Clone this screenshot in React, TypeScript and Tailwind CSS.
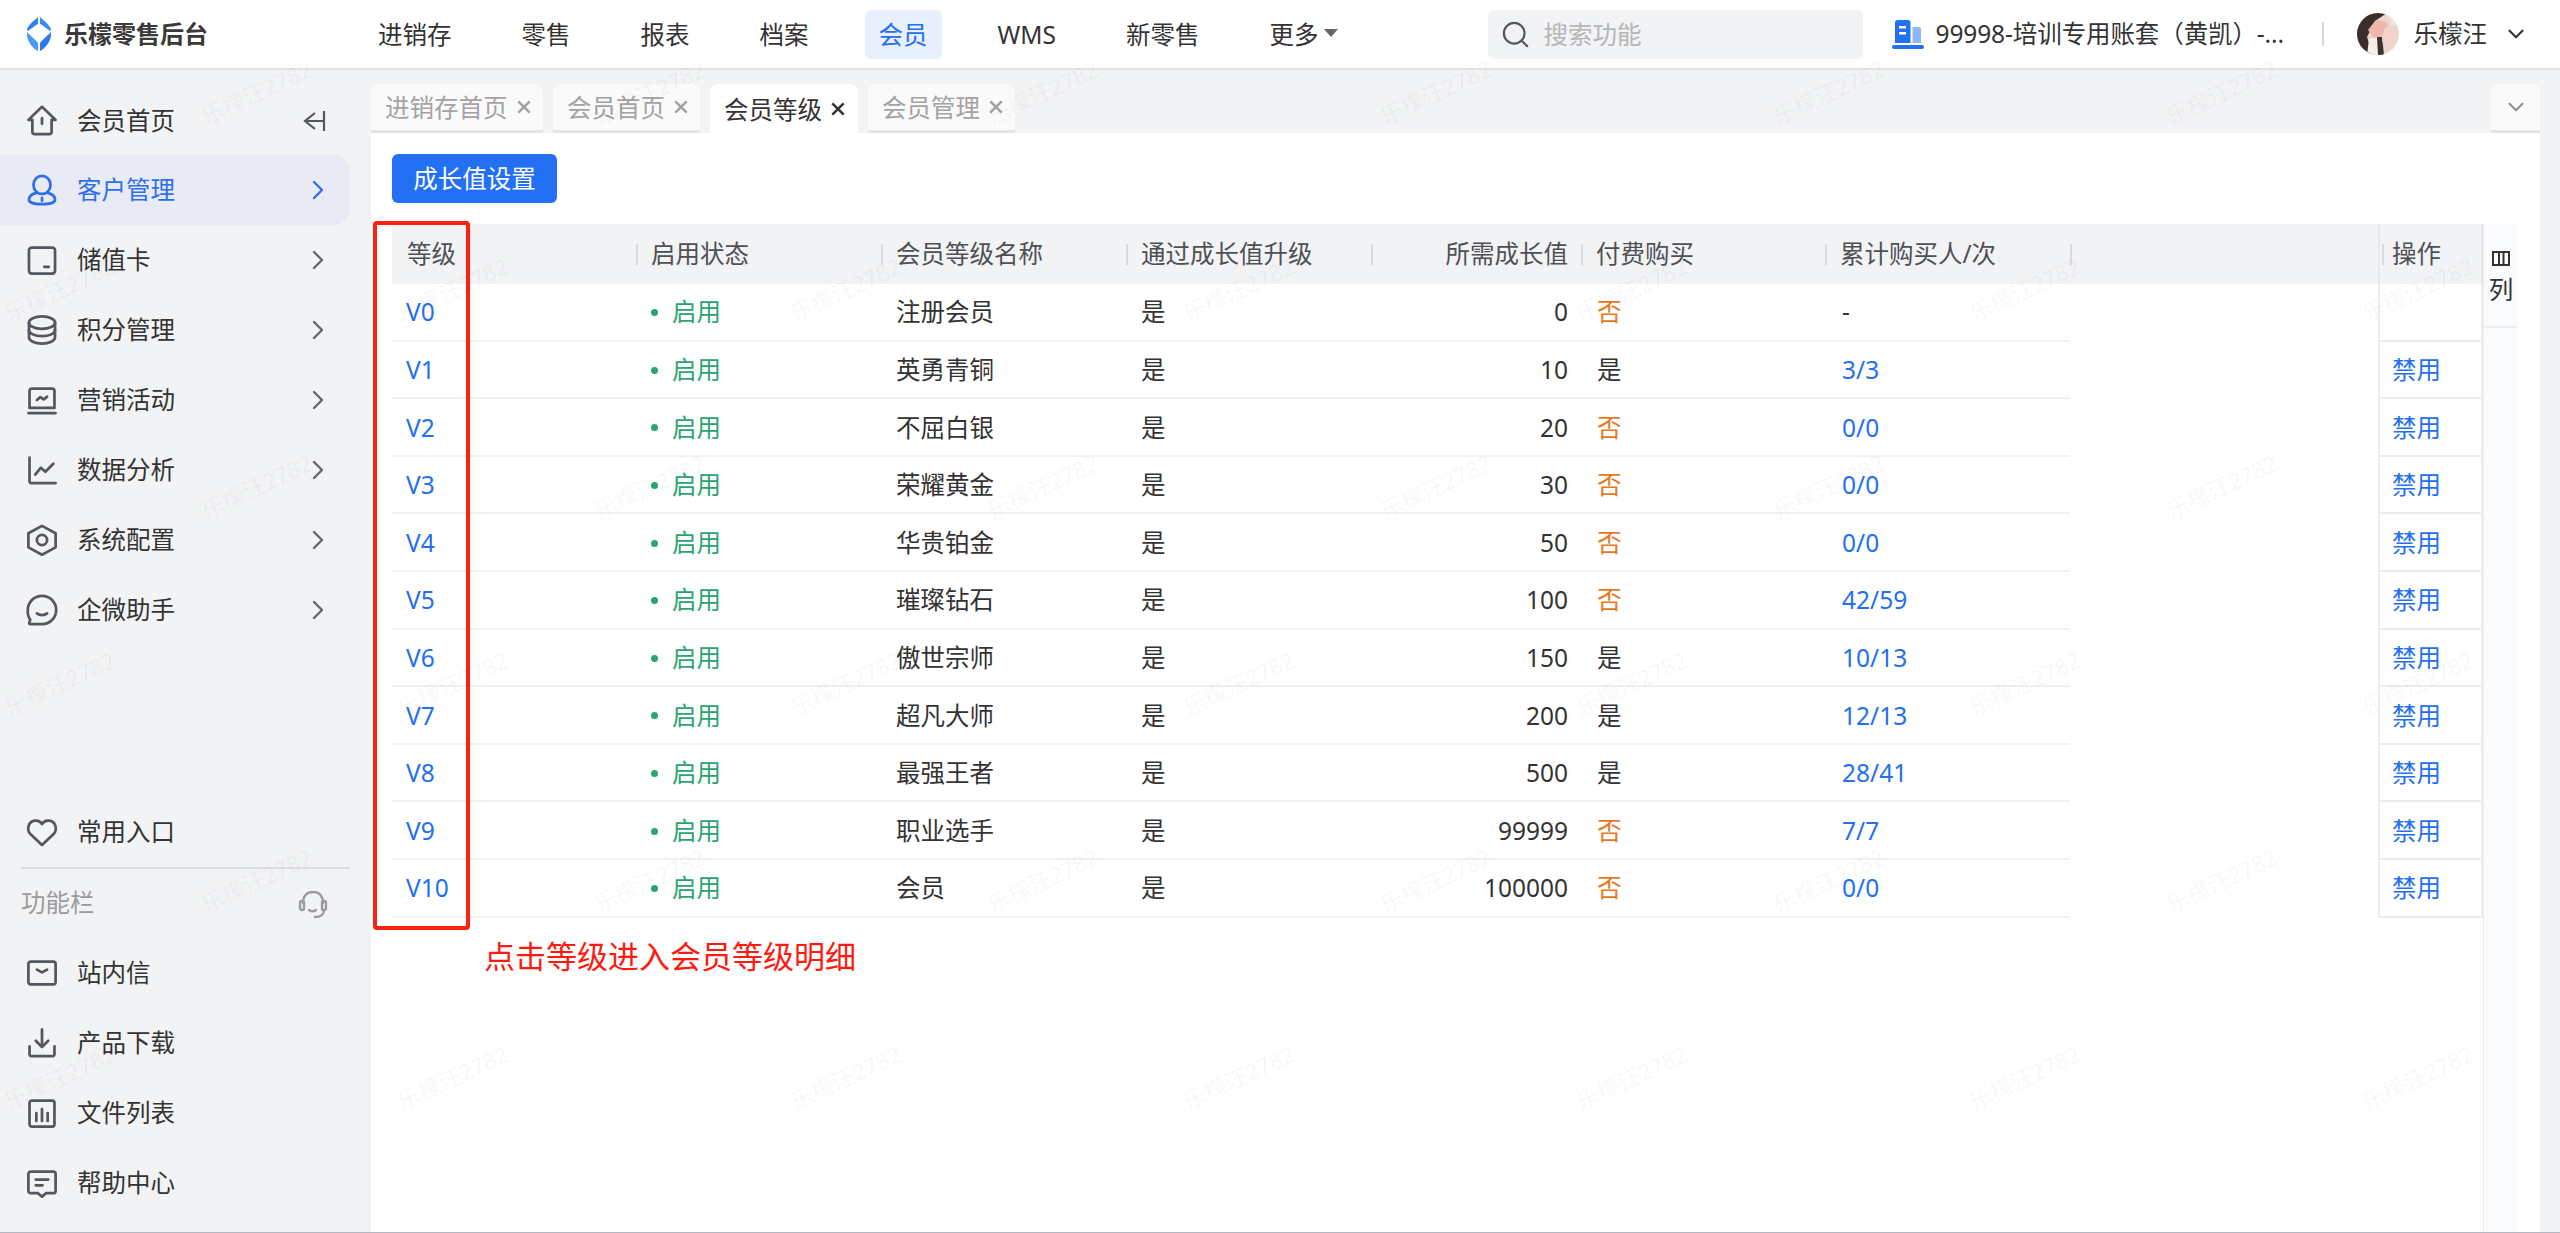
import React from "react";
import { ChevronRight, ChevronDown, Search } from "lucide-react";

const NAV = ["进销存", "零售", "报表", "档案", "会员", "WMS", "新零售"];
const TABS = [
  { label: "进销存首页", w: "w-[172px]" },
  { label: "会员首页", w: "w-[147px]" },
  { label: "会员等级", w: "w-[148px]", active: true },
  { label: "会员管理", w: "w-[147px]" },
];

const ROWS = [
  ["V0", "注册会员", "0", "否", "-"],
  ["V1", "英勇青铜", "10", "是", "3/3"],
  ["V2", "不屈白银", "20", "否", "0/0"],
  ["V3", "荣耀黄金", "30", "否", "0/0"],
  ["V4", "华贵铂金", "50", "否", "0/0"],
  ["V5", "璀璨钻石", "100", "否", "42/59"],
  ["V6", "傲世宗师", "150", "是", "10/13"],
  ["V7", "超凡大师", "200", "是", "12/13"],
  ["V8", "最强王者", "500", "是", "28/41"],
  ["V9", "职业选手", "99999", "否", "7/7"],
  ["V10", "会员", "100000", "否", "0/0"],
];

// watermark grid, same text repeated diagonally over the whole page
const WATERMARKS: { x: number; y: number }[] = [];
for (let r = 0; r < 6; r++) {
  for (let c = 0; c < 7; c++) {
    const x = (r % 2 === 0 ? 257 : 60) + c * 393;
    if (x < 2480) WATERMARKS.push({ x, y: 93 + r * 197 });
  }
}

function Icon({ children, className = "" }: { children: React.ReactNode; className?: string }) {
  return (
    <svg
      viewBox="0 0 30 30"
      fill="none"
      stroke="currentColor"
      strokeWidth="2.4"
      strokeLinecap="round"
      strokeLinejoin="round"
      className={`w-[34px] h-[34px] shrink-0 ${className}`}
    >
      {children}
    </svg>
  );
}

const icons: Record<string, React.ReactNode> = {
  home: (
    <>
      <path d="M15 2.5 27 14h-3.500v10.500a2 2 0 0 1-2 2h-13a2 2 0 0 1-2-2V14H3z" />
      <path d="M15 12.500v5" />
    </>
  ),
  user: (
    <>
      <ellipse cx="15" cy="10.500" rx="7.500" ry="8" />
      <path d="M10 17.500c-4 1-6.500 3.500-6.500 6 0 2.500 5 4 11.500 4s11.500-1.500 11.500-4c0-2.500-2.500-5-6.500-6" />
      <path d="M15 22v2.500" />
    </>
  ),
  card: (
    <>
      <rect x="3.500" y="4" width="23" height="23" rx="2.500" />
      <path d="M17 21h4" />
    </>
  ),
  coin: (
    <>
      <ellipse cx="15" cy="8.500" rx="11.500" ry="5.500" />
      <path d="M3.500 8.500v6.500c0 3 5 5.500 11.500 5.500s11.500-2.500 11.500-5.500V8.500" />
      <path d="M3.500 15v6.500c0 3 5 5.500 11.500 5.500s11.500-2.500 11.500-5.500V15" />
    </>
  ),
  monitor: (
    <>
      <path d="M4 22V7a2 2 0 0 1 2-2h18a2 2 0 0 1 2 2v15z" />
      <path d="M3 26.500h24" />
      <path d="m10.500 15 3-2.500 3 2 3-2.500" />
    </>
  ),
  chart: (
    <>
      <path d="M4 4v21a1.500 1.500 0 0 0 1.500 1.500H27" />
      <path d="m9 19 5-6 4 3.500 7-7" />
    </>
  ),
  hex: (
    <>
      <path d="m15 2.500 12 6.500v12.500l-12 6.500-12-6.500V9z" />
      <circle cx="15" cy="15" r="4.500" />
    </>
  ),
  chat: (
    <>
      <path d="M15 2.500c7 0 12.500 5.500 12.500 12.500S22 27.500 15 27.500H5c-1.500 0-1.500-1-1-2l.7-1.800A12.500 12.500 0 0 1 2.500 15C2.500 8 8 2.500 15 2.500z" />
      <path d="M10.500 18c2.500 2 6.500 2 9 0" />
    </>
  ),
  heart: <path d="M15 26.500 4.500 16.500C1.500 13 2.500 6 8.500 5c3-.4 5.300 1 6.500 3 1.200-2 3.500-3.400 6.500-3 6 1 7 8 4 11.500z" />,
  mail: (
    <>
      <rect x="3" y="5" width="24" height="20" rx="2" />
      <path d="m10.500 12 4.500 2.500 4.500-2.500" />
    </>
  ),
  download: (
    <>
      <path d="M15 3v15" />
      <path d="m9.500 13 5.500 5.500 5.500-5.500" />
      <path d="M4 18v7a1.500 1.500 0 0 0 1.500 1.500h19A1.500 1.500 0 0 0 26 25v-7" />
    </>
  ),
  bars: (
    <>
      <rect x="4" y="4" width="22" height="23" rx="2" />
      <path d="M10 15v7M15 11.500V22M20 15v7" />
    </>
  ),
  message: (
    <>
      <path d="M5 5h20a2 2 0 0 1 2 2v15a2 2 0 0 1-2 2h-6.500L15 27l-3.500-3H5a2 2 0 0 1-2-2V7a2 2 0 0 1 2-2z" />
      <path d="M9.500 12h11M9.500 17h6" />
    </>
  ),
};

function SideItem({ icon, label, arrow = true, active = false }: { icon: string; label: string; arrow?: boolean; active?: boolean }) {
  return (
    <div
      className={`flex items-center h-[70px] w-[350px] pl-[25px] pr-[16px] rounded-r-[16px] ${
        active ? "bg-[#e8ebf4] text-[#2f6fed]" : "text-[#333333]"
      }`}
    >
      <Icon className={active ? "text-[#2f6fed]" : "text-[#55565f]"}>{icons[icon]}</Icon>
      <span className="ml-[18px] flex-1 text-[24.5px]">{label}</span>
      {arrow && <ChevronRight size={32} strokeWidth={1.8} className={active ? "text-[#2f6fed]" : "text-[#66676e]"} />}
    </div>
  );
}

function TabClose({ color }: { color: string }) {
  return (
    <svg viewBox="0 0 14 14" className={`w-[16px] h-[16px] ml-[8px] ${color}`} stroke="currentColor" strokeWidth="2.2" fill="none">
      <path d="m2 2 10 10M12 2 2 12" />
    </svg>
  );
}

function HeadCell({ w, sep = true, right = false, label }: { w: string; sep?: boolean; right?: boolean; label?: string }) {
  return (
    <div className={`flex items-center h-full ${w}`}>
      <span className={`w-[2px] h-[21px] shrink-0 ${sep ? "bg-[#d9dadd]" : ""}`} />
      <span className={`pl-[13px] flex-1 whitespace-nowrap ${right ? "text-right pr-[13px]" : ""}`}>{label}</span>
    </div>
  );
}

function Row({ row }: { row: string[] }) {
  const [level, name, need, paid, total] = row;
  return (
    <div className="flex h-[57.6px]">
      <div className="flex w-[1678px] items-center pt-[2px] border-b-2 border-[#f0f1f3]">
        <div className="w-[244px] pl-[14px] text-[#2470f0]">{level}</div>
        <div className="w-[245px] pl-[15px] flex items-center text-[#2ba471]">
          <span className="w-[7px] h-[7px] rounded-full bg-[#2ba471] mr-[14px]" />
          启用
        </div>
        <div className="w-[245px] pl-[15px]">{name}</div>
        <div className="w-[245px] pl-[15px]">是</div>
        <div className="w-[210px] pr-[13px] text-right">{need}</div>
        <div className={`w-[244px] pl-[16px] ${paid === "否" ? "text-[#e8781e]" : ""}`}>{paid}</div>
        <div className={`w-[245px] pl-[17px] ${total === "-" ? "" : "text-[#2470f0]"}`}>{total}</div>
      </div>
      <div className="w-[308px]" />
      <div className="w-[105px] flex items-center pt-[2px] pl-[12px] border-x-2 border-b-2 border-[#ecedef] text-[#2470f0]">
        {level === "V0" ? "" : "禁用"}
      </div>
    </div>
  );
}

export default function App() {
  return (
    <div className="relative w-[2560px] h-[1233px] overflow-hidden flex flex-col bg-[#f2f3f5] border-b border-[#b4bac2] text-[24.5px] text-[#333333] font-['Noto_Sans','Noto_Sans_CJK_SC',sans-serif]">
      {/* top bar */}
      <header className="h-[70px] shrink-0 flex items-center bg-white border-b-2 border-[#e2e3e5]">
        <div className="w-[364px] flex items-center pl-[26px]">
          <svg viewBox="0 0 26 36" className="w-[26px] h-[36px]">
            <path d="M12 1C9 4 3 8 1 13l.500 2C4 14 8 10 12 8z" fill="#2f7ff5" />
            <path d="M14 1c3 3 9 7 11 12l-.500 2C22 14 18 10 14 8z" fill="#3b8bf7" />
            <path d="M13 9.500c2 3 4 5.500 6.500 7.500-2.500 2-4.500 4.500-6.500 7.500-2-3-4-5.500-6.500-7.500 2.500-2 4.500-4.500 6.500-7.500z" fill="#fff" />
            <path d="M1 16c2 2.500 8 7 11 11v8C6 32 0 24 1 16z" fill="#4a97f8" />
            <path d="M25 16c-2 2.500-8 7-11 11v8c6-3 12-11 11-19z" fill="#2b78f2" />
          </svg>
          <span className="ml-[12px] text-[24px] font-bold text-[#3a3a3a] whitespace-nowrap">乐檬零售后台</span>
        </div>
        <nav className="flex items-center gap-[42px]">
          {NAV.map((item) => (
            <div
              key={item}
              className={`h-[49px] px-[14px] pt-[2px] flex items-center rounded-[6px] ${item === "会员" ? "bg-[#e8effd] text-[#2470f0]" : ""}`}
            >
              {item}
            </div>
          ))}
          <div className="h-[49px] pl-[14px] pt-[2px] flex items-center">
            更多
            <span className="ml-[6px] mb-[4px] w-0 h-0 border-x-[7px] border-x-transparent border-t-[8px] border-t-[#666666]" />
          </div>
        </nav>
        <div className="ml-[150px] w-[375px] h-[49px] bg-[#f2f3f5] rounded-[6px] flex items-center pl-[12px] text-[#b5b6b8]">
          <Search size={31} strokeWidth={1.7} className="text-[#55565f]" />
          <span className="ml-[12px] pt-[3px]">搜索功能</span>
        </div>
        <svg viewBox="0 0 32 30" className="ml-[29px] w-[32px] h-[30px]">
          <path d="M3 3.500A2.500 2.500 0 0 1 5.500 1H16a2.500 2.500 0 0 1 2.500 2.500V24H3z" fill="#2470f5" />
          <rect x="7" y="7" width="7" height="2.500" fill="#fff" />
          <rect x="7" y="13" width="7" height="2.500" fill="#fff" />
          <path d="M20.500 8H27a2 2 0 0 1 2 2v14h-8.500z" fill="#8fb6fa" />
          <rect x="0" y="26" width="32" height="4" rx="2" fill="#2470f5" />
        </svg>
        <span className="ml-[11px] w-[348px] whitespace-nowrap tracking-[-0.1px]">99998-培训专用账套（黄凯）-...</span>
        <span className="ml-[39px] w-[2px] h-[24px] bg-[#d6d7d9]" />
        <svg viewBox="0 0 42 42" className="ml-[33px] w-[42px] h-[42px] rounded-full">
          <rect width="42" height="42" fill="#e8d8cc" />
          <path d="M0 0h30L18 8 10 24l6 18H0z" fill="#3a2d2a" />
          <path d="M18 8c6-2 11 0 13 5l-4 10-10 2-6-8z" fill="#efb6ac" />
          <path d="M12 26l10-2 3 18H10z" fill="#f3efe6" />
          <path d="M20 24l5 0 2 18h-6z" fill="#3a322f" />
          <path d="M27 16c4-4 9-3 10 2l2 10-8 6-6-6z" fill="#f1d3cb" />
          <path d="M30 0h12v14l-8-2z" fill="#efe6da" />
        </svg>
        <span className="ml-[14px]">乐檬汪</span>
        <ChevronDown size={26} strokeWidth={2} className="ml-[16px] text-[#333333]" />
      </header>

      <div className="flex-1 flex min-h-0">
        {/* left menu */}
        <aside className="w-[371px] shrink-0 flex flex-col pt-[16px] pb-[14px]">
          <div className="flex items-center h-[70px] w-[350px] pl-[25px] pr-[24px]">
            <Icon className="text-[#55565f]">{icons.home}</Icon>
            <span className="ml-[18px] flex-1">会员首页</span>
            <svg viewBox="0 0 24 24" className="w-[24px] h-[24px] text-[#55565f]" fill="none" stroke="currentColor" strokeWidth="2.2">
              <path d="M13 4 3 12l10 8M3 12h19M22 2v20" />
            </svg>
          </div>
          <div className="-mt-[1px]">
            <SideItem icon="user" label="客户管理" active />
          </div>
          <SideItem icon="card" label="储值卡" />
          <SideItem icon="coin" label="积分管理" />
          <SideItem icon="monitor" label="营销活动" />
          <SideItem icon="chart" label="数据分析" />
          <SideItem icon="hex" label="系统配置" />
          <SideItem icon="chat" label="企微助手" />

          <div className="mt-auto">
            <SideItem icon="heart" label="常用入口" arrow={false} />
            <div className="ml-[21px] w-[329px] border-t-2 border-[#dcdde0]" />
            <div className="flex items-center justify-between h-[69px] pl-[21px] pr-[43px] text-[#9a9b9e]">
              功能栏
              <svg viewBox="0 0 30 30" className="w-[30px] h-[30px] text-[#9a9b9e]" fill="none" stroke="currentColor" strokeWidth="2.4" strokeLinecap="round">
                <path d="M5 14c0-7 4-11 10-11s10 4 10 11" />
                <rect x="2" y="12" width="4" height="9" rx="2" />
                <rect x="24" y="12" width="4" height="9" rx="2" />
                <path d="M26 21c0 4-3 7-9 7M11 21c2 1.500 5 1.500 7 0" />
              </svg>
            </div>
            <SideItem icon="mail" label="站内信" arrow={false} />
            <SideItem icon="download" label="产品下载" arrow={false} />
            <SideItem icon="bars" label="文件列表" arrow={false} />
            <SideItem icon="message" label="帮助中心" arrow={false} />
          </div>
        </aside>

        <main className="flex-1 min-w-0 flex flex-col pt-[14px] pr-[20px]">
          {/* open tabs */}
          <div className="h-[49px] shrink-0 flex justify-between">
            <div className="flex gap-[10px]">
              {TABS.map((t) => (
                <div
                  key={t.label}
                  className={`${t.w} h-[49px] pl-[14px] flex items-center rounded-t-[8px] whitespace-nowrap ${
                    t.active ? "bg-white text-[#333333]" : "bg-[#fafafa] text-[#a3a3a3] border-b-[3px] border-[#e4e5e7]"
                  }`}
                >
                  <span className="pt-[3px]">{t.label}</span>
                  <TabClose color={t.active ? "text-[#333333]" : "text-[#a3a3a3]"} />
                </div>
              ))}
            </div>
            <div className="w-[49px] h-[49px] flex items-center justify-center rounded-t-[8px] bg-[#fafafa] border-b-[3px] border-[#e4e5e7]">
              <ChevronDown size={26} strokeWidth={1.8} className="text-[#8a8b8e]" />
            </div>
          </div>

          {/* page */}
          <div className="relative flex-1 min-h-0 bg-white pl-[21px] pr-[22px] pt-[21px] flex flex-col">
            <button className="w-[165px] h-[49px] shrink-0 pt-[2px] rounded-[6px] bg-[#2470f5] text-white text-[24.5px] shadow-[0_2px_0_rgba(0,0,0,0.03)]">
              成长值设置
            </button>

            <div className="mt-[21px] flex-1 min-h-0 flex">
              <div className="w-[2091px] shrink-0">
                <div className="flex items-center h-[60px] bg-[#f2f3f5] text-[#4f5055]">
                  <HeadCell w="w-[244px]" sep={false} label="等级" />
                  <HeadCell w="w-[245px]" label="启用状态" />
                  <HeadCell w="w-[245px]" label="会员等级名称" />
                  <HeadCell w="w-[245px]" label="通过成长值升级" />
                  <HeadCell w="w-[210px]" right label="所需成长值" />
                  <HeadCell w="w-[244px]" label="付费购买" />
                  <HeadCell w="w-[245px]" label="累计购买人/次" />
                  <HeadCell w="w-[308px]" />
                  <div className="w-[105px] h-full flex items-center border-x-2 border-[#e8e9eb]">
                    <span className="ml-[2px] w-[2px] h-[21px] bg-[#d9dadd]" />
                    <span className="pl-[8px]">操作</span>
                  </div>
                </div>
                {ROWS.map((row) => (
                  <Row key={row[0]} row={row} />
                ))}
                <p className="ml-[92px] mt-[20px] text-[31px] leading-[36px] text-[#ff1a10]">点击等级进入会员等级明细</p>
              </div>

              <div className="w-[35px] shrink-0 bg-[#fafbfc] border-l border-[#ececee]">
                <div className="h-[104px] mx-[1px] flex flex-col items-center pt-[26px] border-b-2 border-[#eeeff1]">
                  <svg viewBox="0 0 18 16" className="w-[18px] h-[16px]" fill="none" stroke="#333333" strokeWidth="2">
                    <path d="M1 2h16v13H1zM1 2h16M7 2v13M11.500 2v13" />
                  </svg>
                  <span className="mt-[6px]">列</span>
                </div>
              </div>
            </div>

            {/* red marker around the level column */}
            <div className="absolute left-[2px] top-[88px] w-[97px] h-[709px] border-4 border-[#ff2012] rounded-[4px] pointer-events-none" />
          </div>
        </main>
      </div>

      {/* watermark layer */}
      <div className="absolute inset-0 overflow-hidden pointer-events-none">
        {WATERMARKS.map((m, i) => (
          <span
            key={i}
            className="absolute -translate-x-1/2 -translate-y-1/2 -rotate-[25deg] whitespace-nowrap text-[22.5px] text-black/[0.045]"
            style={{ left: m.x, top: m.y }}
          >
            乐檬汪2782
          </span>
        ))}
      </div>
    </div>
  );
}
